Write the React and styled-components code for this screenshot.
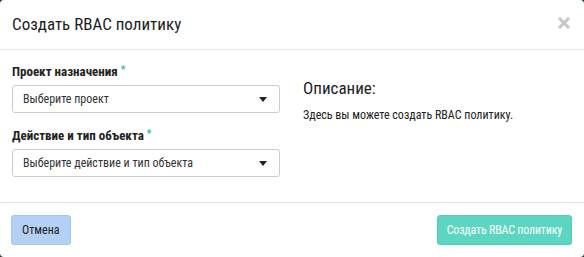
import React from "react";
import styled, { createGlobalStyle } from "styled-components";

const GlobalStyle = createGlobalStyle`
  html, body {
    margin: 0;
    padding: 0;
    background: #1f3b3a;
  }
  body {
    font-family: "Roboto Condensed", "DejaVu Sans Condensed", sans-serif;
    color: #222;
  }
`;

const Modal = styled.div`
  width: 584px;
  height: 257px;
  background: #fff;
  border-radius: 4px;
  display: flex;
  flex-direction: column;
  box-sizing: border-box;
  overflow: hidden;
`;

const Header = styled.div`
  height: 50px;
  box-sizing: border-box;
  border-bottom: 1px solid #e5e5e5;
  display: flex;
  align-items: center;
  justify-content: space-between;
  padding: 0 14px 2px 12px;
`;

const Title = styled.h4`
  margin: 0;
  font-size: 17px;
  font-weight: normal;
  color: #1e1e1e;
`;

const Close = styled.svg`
  width: 12px;
  height: 12px;
  margin-top: -2px;
`;

const Body = styled.div`
  flex: 1;
  display: grid;
  grid-template-columns: 268px 1fr;
  column-gap: 23px;
  padding: 14px 12px 0 12px;
`;

const Fields = styled.div`
  display: flex;
  flex-direction: column;
`;

const Label = styled.label`
  font-size: 13px;
  font-weight: bold;
  color: #222;
  margin-bottom: 6px;
  display: block;
`;

const Star = styled.span`
  color: #1abc9c;
  font-size: 10px;
  vertical-align: top;
  margin-left: 3px;
`;

const Select = styled.div`
  height: 28px;
  box-sizing: border-box;
  border: 1px solid #ccc;
  border-radius: 3px;
  display: flex;
  align-items: center;
  justify-content: space-between;
  padding: 0 12px 0 10px;
  font-size: 12px;
  color: #333;
  margin-bottom: ${(p) => p.$mb || 0}px;
`;

const Caret = styled.span`
  width: 0;
  height: 0;
  border-left: 4px solid transparent;
  border-right: 4px solid transparent;
  border-top: 5px solid #222;
`;

const Info = styled.div`
  padding-top: 14px;
`;

const InfoTitle = styled.h3`
  margin: 0 0 10px 0;
  font-size: 17px;
  font-weight: normal;
  color: #222;
`;

const InfoText = styled.p`
  margin: 0;
  font-size: 12px;
  color: #222;
`;

const Footer = styled.div`
  height: 55px;
  border-top: 1px solid #e5e5e5;
  display: flex;
  align-items: center;
  justify-content: space-between;
  padding: 0 12px 0 11px;
  margin-top: auto;
  box-sizing: border-box;
`;

const Button = styled.button`
  height: 30px;
  box-sizing: border-box;
  border-radius: 3px;
  font-family: inherit;
  font-size: 12px;
  letter-spacing: ${(p) => (p.$primary ? "-0.2px" : "0")};
  padding: 0 ${(p) => (p.$primary ? 9 : 10)}px;
  cursor: pointer;
  background: ${(p) => (p.$primary ? "#5cd6c0" : "#b5d0f5")};
  border: 1px solid ${(p) => (p.$primary ? "#52cdb7" : "#a3c3f0")};
  color: ${(p) => (p.$primary ? "#fff" : "#222")};
`;

export default function App() {
  return (
    <>
      <GlobalStyle />
      <Modal>
        <Header>
          <Title>Создать RBAC политику</Title>
          <Close viewBox="0 0 12 12">
            <path
              d="M2 2 L10 10 M10 2 L2 10"
              stroke="#c6c6c6"
              strokeWidth="3"
              strokeLinecap="square"
            />
          </Close>
        </Header>
        <Body>
          <Fields>
            <Label>
              Проект назначения<Star>*</Star>
            </Label>
            <Select $mb={15}>
              Выберите проект
              <Caret />
            </Select>
            <Label>
              Действие и тип объекта<Star>*</Star>
            </Label>
            <Select>
              Выберите действие и тип объекта
              <Caret />
            </Select>
          </Fields>
          <Info>
            <InfoTitle>Описание:</InfoTitle>
            <InfoText>Здесь вы можете создать RBAC политику.</InfoText>
          </Info>
        </Body>
        <Footer>
          <Button>Отмена</Button>
          <Button $primary>Создать RBAC политику</Button>
        </Footer>
      </Modal>
    </>
  );
}
